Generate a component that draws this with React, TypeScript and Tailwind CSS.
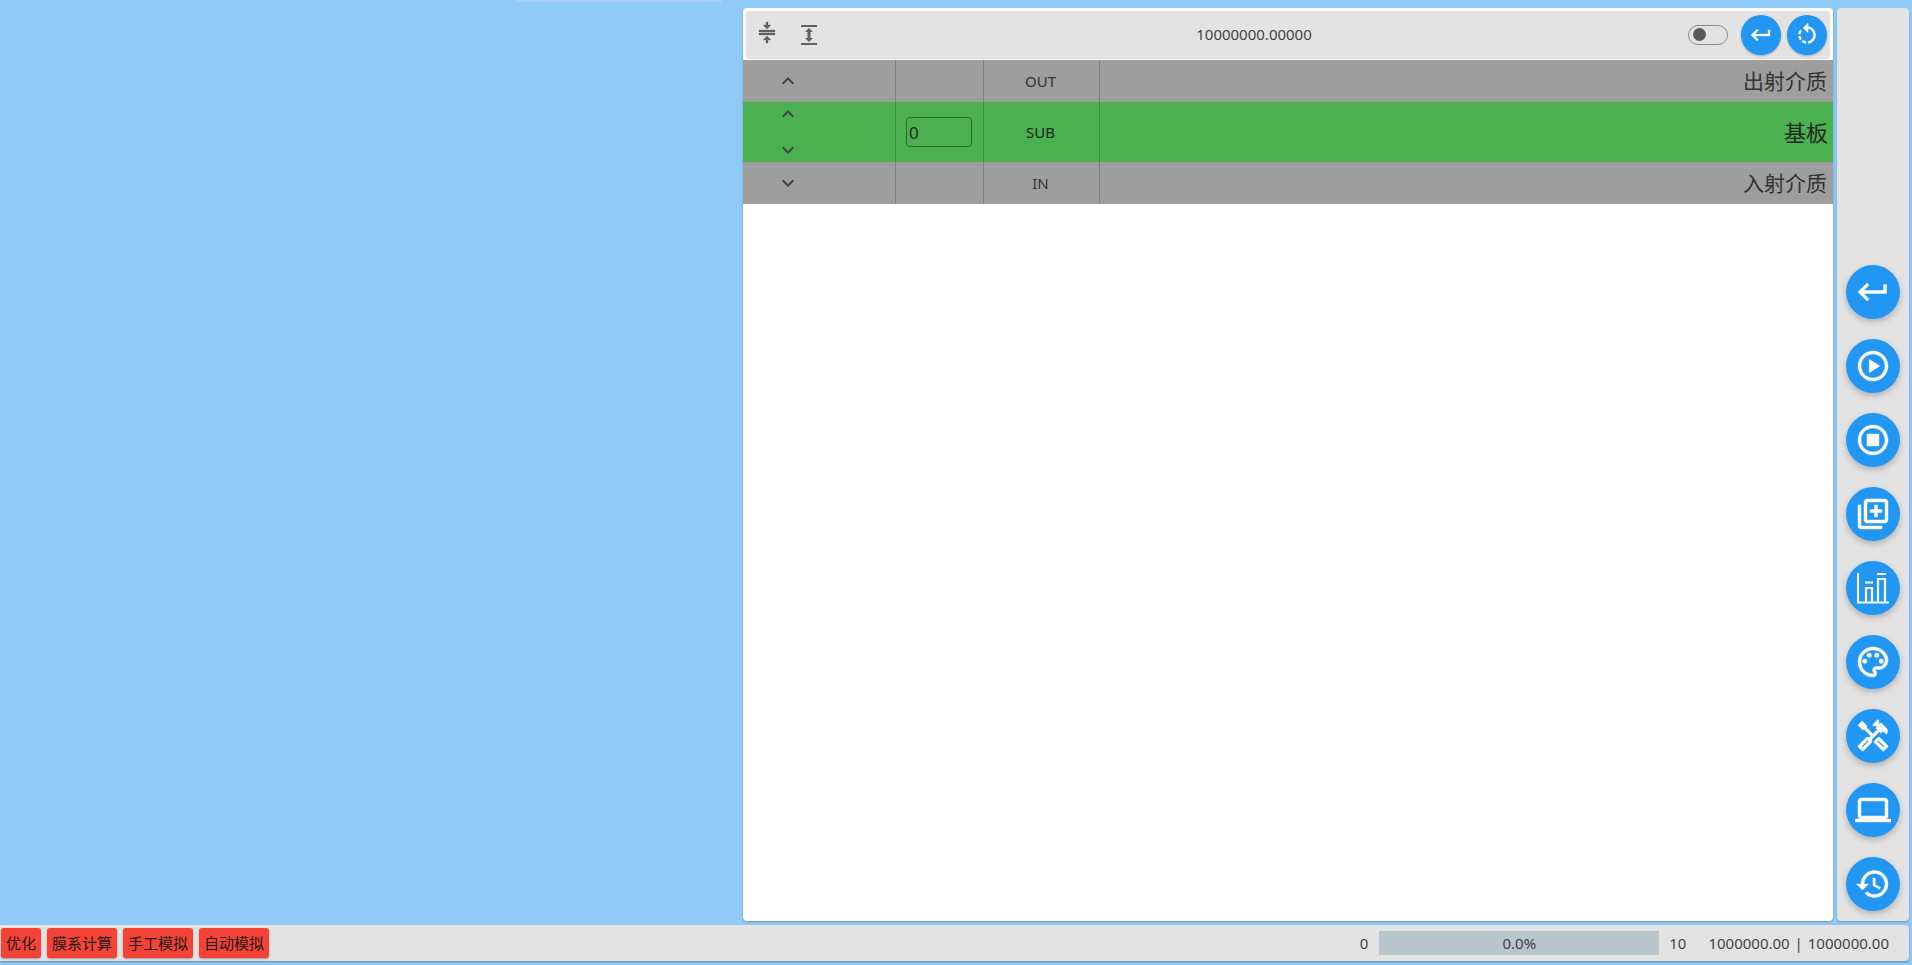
import React from "react";
import {
  MdExpandLess,
  MdExpandMore,
  MdKeyboardReturn,
  MdCompress,
  MdRotateLeft,
  MdOutlinePlayCircle,
  MdOutlineStopCircle,
  MdOutlineLibraryAdd,
  MdOutlinePalette,
  MdOutlineHandyman,
  MdOutlineLaptop,
  MdHistory,
} from "react-icons/md";

const fontStack = "font-['Noto_Sans','Noto_Sans_CJK_SC',sans-serif]";

// the Md icons carry an empty 24x24 box path, it must not get the thickening stroke
const boldIcon = "stroke-current stroke-[0.3] [&_path[fill=none]]:stroke-none";

const HeightIcon = () => (
  <svg width="24" height="24" viewBox="0 0 24 24" fill="currentColor">
    <path d="M4 2h16v2H4zM4 20h16v2H4zM12 5l4 4h-2.5v6H16l-4 4-4-4h2.5V9H8z" />
  </svg>
);

const BarsIcon = () => (
  <svg width="32" height="32" viewBox="0 0 32 32" fill="none" stroke="currentColor" strokeWidth="2.2">
    <path d="M1 1v29.5M0 30.5h32" />
    <path d="M9 30V16h6v14M8 10.5h8M21 30V7h7v23M20 2h9" />
  </svg>
);

const Fab = ({ children, size }: { children: React.ReactNode; size: "lg" | "sm" }) => (
  <button
    className={
      size === "lg"
        ? "flex h-[54px] w-[54px] items-center justify-center rounded-full bg-[#2196f3] text-white shadow-[0_3px_6px_rgba(0,0,0,0.22)]"
        : "flex h-10 w-10 items-center justify-center rounded-full bg-[#2196f3] text-white shadow-[0_1px_2px_rgba(0,0,0,0.25)]"
    }
  >
    {children}
  </button>
);

const Row = ({
  up,
  down,
  code,
  name,
  active,
}: {
  up?: boolean;
  down?: boolean;
  code: string;
  name: string;
  active?: boolean;
}) => (
  <div
    className={
      active
        ? "flex h-[60px] items-stretch bg-[#4caf50] text-[#1d2a1e]"
        : "flex h-[42px] items-stretch bg-[#9e9e9e] text-[#333333]"
    }
  >
    <div className="flex w-[153px] flex-col justify-center border-r border-black/20 pl-[33px] text-[#424242]">
      {up ? <MdExpandLess size={24} /> : null}
      {active ? <div className="h-3" /> : null}
      {down ? <MdExpandMore size={24} /> : null}
    </div>
    <div className="flex w-[88px] items-center justify-center border-r border-black/20 pr-[1px]">
      {active ? (
        <input
          readOnly
          value="0"
          className="h-[30px] w-[66px] rounded border border-black/40 bg-transparent pl-[2px] text-[17px] text-[#1d2a1e] outline-none"
        />
      ) : null}
    </div>
    <div className="flex w-[116px] items-center justify-center border-r border-black/20 pr-[2px]">
      {code}
    </div>
    <div
      className={
        active
          ? "flex flex-1 items-center justify-end pr-[5px] text-[22px]"
          : "flex flex-1 items-center justify-end pt-[2px] pr-[6px] text-[21px]"
      }
    >
      {name}
    </div>
  </div>
);

export default function App() {
  return (
    <div className={`flex h-[965px] w-[1912px] flex-col overflow-hidden bg-[#90caf9] text-[15px] ${fontStack}`}>
      <div className="flex h-[925px]">
        <div className="w-[743px]">
          <div className="ml-[516px] h-[3px] w-[206px] border-r border-b border-l border-[#9cc8ee] bg-[#a6d4fa]" />
        </div>

        <main className="mt-2 mb-1 w-[1090px] rounded bg-white shadow-[0_1px_2px_rgba(0,0,0,0.25)]">
          <div className="p-[3px] pb-0.5">
            <div className="flex h-[47px] items-center rounded-sm bg-[#e3e3e3] shadow-[0_1px_1px_rgba(0,0,0,0.15)]">
              <div className="flex w-[84px] items-center gap-[18px] pl-[9px] text-[#616161]">
                <MdCompress size={24} className={`mb-[3px] ${boldIcon}`} />
                <div className="mt-[1px]">
                  <HeightIcon />
                </div>
              </div>
              <div className="flex-1 pr-[10px] text-center text-[#424242]">10000000.00000</div>
              <div className="flex items-center gap-[6px] pr-[3px]">
                <div className="mr-[7px] flex h-5 w-10 items-center rounded-full border border-[#8a8a8a] pl-[4px]">
                  <span className="h-[13px] w-[13px] rounded-full bg-[#5a5a5a]" />
                </div>
                <Fab size="sm">
                  <MdKeyboardReturn size={24} className={boldIcon} />
                </Fab>
                <Fab size="sm">
                  <MdRotateLeft size={26} className={boldIcon} />
                </Fab>
              </div>
            </div>
          </div>
          <Row up code="OUT" name="出射介质" />
          <Row active up down code="SUB" name="基板" />
          <Row down code="IN" name="入射介质" />
        </main>

        <aside className="mt-2 mb-1 ml-1 flex w-[72px] flex-col items-center justify-end gap-5 rounded bg-[#e3e3e3] pb-[10px] shadow-[0_1px_2px_rgba(0,0,0,0.25)]">
          <Fab size="lg"><MdKeyboardReturn size={36} className={boldIcon} /></Fab>
          <Fab size="lg"><MdOutlinePlayCircle size={36} className={boldIcon} /></Fab>
          <Fab size="lg"><MdOutlineStopCircle size={36} className={boldIcon} /></Fab>
          <Fab size="lg"><MdOutlineLibraryAdd size={36} className={boldIcon} /></Fab>
          <Fab size="lg"><BarsIcon /></Fab>
          <Fab size="lg"><MdOutlinePalette size={36} className={boldIcon} /></Fab>
          <Fab size="lg"><MdOutlineHandyman size={36} className={boldIcon} /></Fab>
          <Fab size="lg"><MdOutlineLaptop size={36} className={boldIcon} /></Fab>
          <Fab size="lg"><MdHistory size={36} className={boldIcon} /></Fab>
        </aside>
      </div>

      <footer className="flex h-[36px] w-[1909px] items-center rounded-r bg-[#e3e3e3] pl-[1px] text-[#424242] shadow-[0_1px_2px_rgba(0,0,0,0.35)]">
        <div className="flex gap-1.5 text-[#1a1a1a]">
          {["优化", "膜系计算", "手工模拟", "自动模拟"].map((t) => (
            <span key={t} className="flex h-[30px] items-center rounded-[3px] bg-[#f44336] px-[5px] shadow-[0_1px_2px_rgba(0,0,0,0.3)]">
              {t}
            </span>
          ))}
        </div>
        <div className="ml-auto flex items-center">
          <span>0</span>
          <div className="ml-[11px] flex h-6 w-[280px] items-center justify-center bg-[#b6c6cb]">0.0%</div>
          <span className="ml-[10px]">10</span>
          <span className="ml-[22px] mr-[20px]">
            1000000.00 <span className="mx-[1px]">|</span> 1000000.00
          </span>
        </div>
      </footer>
    </div>
  );
}
